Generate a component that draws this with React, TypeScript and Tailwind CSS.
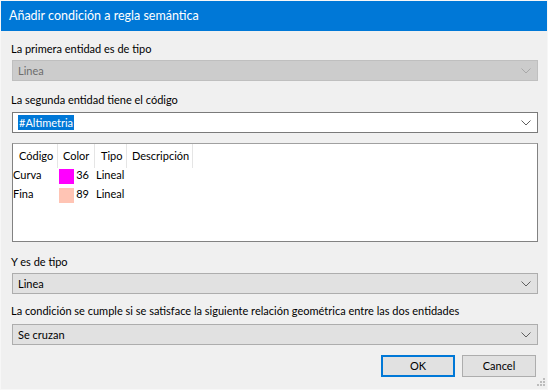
import React from "react";

const Chevron = ({ color = "#5f5f5f" }: { color?: string }) => (
  <svg width="10" height="6" viewBox="0 0 10 6" className="shrink-0">
    <polyline points="0.5,0.5 5,5 9.5,0.5" fill="none" stroke={color} strokeWidth="1" />
  </svg>
);

const Select = ({ value, disabled }: { value: string; disabled?: boolean }) => (
  <div
    className={
      disabled
        ? "ml-[11px] mr-[9px] h-[21px] flex items-center justify-between bg-[#cccccc] border border-[#bfbfbf] pl-[5px] pr-[6px] text-[#6d6d6d]"
        : "ml-[11px] mr-[9px] h-[21px] flex items-center justify-between bg-[#e1e1e1] border border-[#adadad] pl-[5px] pr-[6px] text-black"
    }
  >
    <span className="leading-none">{value}</span>
    <Chevron color={disabled ? "#a8a8a8" : "#5f5f5f"} />
  </div>
);

export default function App() {
  return (
    <div
      className="w-[548px] h-[390px] border border-[#f7f7f7] flex flex-col bg-[#f0f0f0] text-[11px] text-black"
      style={{ fontFamily: 'Lato, "Noto Sans", sans-serif' }}
    >
      <div className="h-[30px] bg-[#0078d7] text-white flex items-center pl-[8px] text-[12.5px] shrink-0">
        Añadir condición a regla semántica
      </div>
      <div className="flex-1 flex flex-col relative">
        <div className="ml-[10px] mt-[10px] h-[16px] leading-[16px]">La primera entidad es de tipo</div>
        <div className="mt-[3px]">
          <Select value="Linea" disabled />
        </div>
        <div className="ml-[10px] mt-[11px] h-[16px] leading-[16px]">La segunda entidad tiene el código</div>
        <div className="mt-[4px] ml-[11px] mr-[9px] h-[21px] flex items-center justify-between bg-white border border-[#7a7a7a] pl-[5px] pr-[6px]">
          <span className="bg-[#0078d7] text-white h-[15px] leading-[15px] px-[1px]">#Altimetria</span>
          <Chevron />
        </div>
        <div className="mt-[10px] ml-[11px] mr-[9px] h-[99px] bg-white border border-[#828282] border-t-[#a0a0a0] flex flex-col">
          <div className="h-[24px] flex items-stretch">
            <div className="w-[45px] border-r border-[#e5e5e5] pl-[6px] flex items-center">Código</div>
            <div className="w-[37px] border-r border-[#e5e5e5] pl-[5px] flex items-center">Color</div>
            <div className="w-[32px] border-r border-[#e5e5e5] pl-[6px] flex items-center">Tipo</div>
            <div className="w-[66px] border-r border-[#e5e5e5] pl-[5px] flex items-center">Descripción</div>
          </div>
          {[
            { c: "Curva", col: "#ff00ff", n: "36" },
            { c: "Fina", col: "#ffc4b4", n: "89" },
          ].map((r) => (
            <div key={r.c} className="h-[19px] flex items-start">
              <div className="w-[46px] leading-[14px]">{r.c}</div>
              <div className="w-[36px] flex items-start">
                <div className="w-[15px] h-[15px] mt-[1px] mr-[2px]" style={{ backgroundColor: r.col }} />
                <span className="w-[13px] text-right leading-[14px]">{r.n}</span>
              </div>
              <div className="pl-[1px] leading-[14px]">Lineal</div>
            </div>
          ))}
        </div>
        <div className="ml-[10px] mt-[12px] h-[16px] leading-[16px]">Y es de tipo</div>
        <div className="mt-[3px]">
          <Select value="Linea" />
        </div>
        <div className="ml-[10px] mt-[9px] h-[16px] leading-[16px]">
          La condición se cumple si se satisface la siguiente relación geométrica entre las dos entidades
        </div>
        <div className="mt-[5px]">
          <Select value="Se cruzan" />
        </div>
        <div className="mt-[10px] flex justify-end gap-[7px] mr-[11px]">
          <button className="w-[74px] h-[22px] bg-[#e1e1e1] border-2 border-[#0078d7] flex items-center justify-center">
            OK
          </button>
          <button className="w-[74px] h-[22px] bg-[#e1e1e1] border border-[#adadad] flex items-center justify-center">
            Cancel
          </button>
        </div>
        <svg width="9" height="9" viewBox="0 0 9 9" className="absolute right-[1px] bottom-[2px]">
          <rect x="6" y="0" width="2" height="2" fill="#bdbdbd" />
          <rect x="3" y="3" width="2" height="2" fill="#bdbdbd" />
          <rect x="6" y="3" width="2" height="2" fill="#bdbdbd" />
          <rect x="0" y="6" width="2" height="2" fill="#bdbdbd" />
          <rect x="3" y="6" width="2" height="2" fill="#bdbdbd" />
          <rect x="6" y="6" width="2" height="2" fill="#bdbdbd" />
        </svg>
      </div>
    </div>
  );
}
